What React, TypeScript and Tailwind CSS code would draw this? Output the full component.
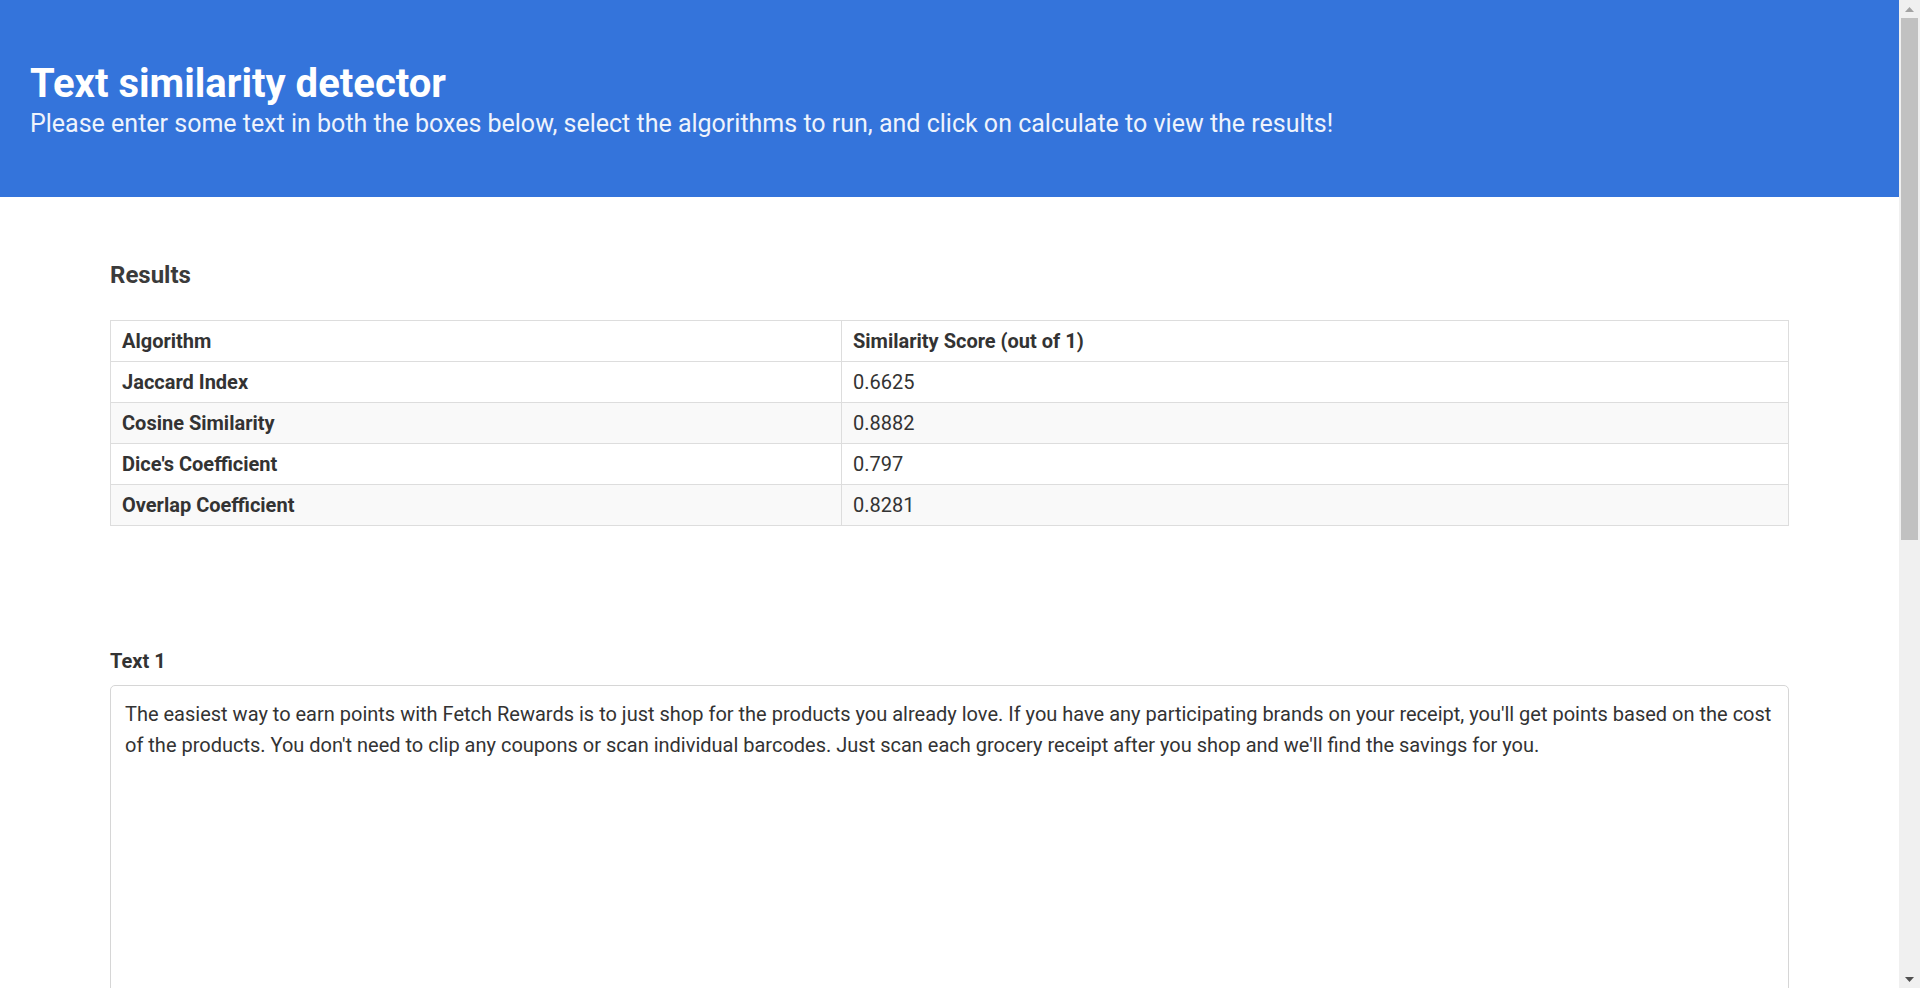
import { useState } from 'react'

const rows = [
  { name: 'Jaccard Index', score: '0.6625' },
  { name: 'Cosine Similarity', score: '0.8882' },
  { name: "Dice's Coefficient", score: '0.797' },
  { name: 'Overlap Coefficient', score: '0.8281' },
]

const text1 =
  "The easiest way to earn points with Fetch Rewards is to just shop for the products you already love. If you have any participating brands on your receipt, you'll get points based on the cost of the products. You don't need to clip any coupons or scan individual barcodes. Just scan each grocery receipt after you shop and we'll find the savings for you."

const text2 =
  "Fetch Rewards makes it easy to earn points. Just shop for the products you love and scan your receipt. If you bought any participating brands, you'll get points based on the cost of the products. No coupons to clip, no barcodes to scan."

function Scrollbar() {
  // the browser's own bar, drawn by hand so it shows in the shot
  return (
    <div className="sticky top-0 flex h-screen w-[21px] shrink-0 flex-col bg-[#f0f0f0]">
      <div className="flex h-[18px] items-center justify-center">
        <svg width="9" height="5" viewBox="0 0 9 5">
          <path d="M0 5 L4.5 0 L9 5 Z" fill="#a3a3a3" />
        </svg>
      </div>
      <div className="mx-[2px] h-[522px] bg-[#c1c1c1]" />
      <div className="flex-1" />
      <div className="flex h-[18px] items-center justify-center">
        <svg width="9" height="5" viewBox="0 0 9 5">
          <path d="M0 0 L9 0 L4.5 5 Z" fill="#505050" />
        </svg>
      </div>
    </div>
  )
}

export default function App() {
  const [t1, setT1] = useState(text1)
  const [t2, setT2] = useState(text2)

  return (
    <div className="flex items-start bg-white text-[#333] [font-family:Roboto,'Liberation_Sans',sans-serif]">
      <div className="min-w-0 flex-1">
        {/* header */}
        <div className="h-[197px] bg-[#3474db] px-[30px] pt-[60px]">
          <h1 className="text-[40px] leading-[48px] font-bold text-white">Text similarity detector</h1>
          <p className="text-[25px] leading-[32px] text-[#eef3fc]">
            Please enter some text in both the boxes below, select the algorithms to run, and click on calculate to view the results!
          </p>
        </div>

        <div className="px-[110px] pt-[63px] pb-[80px]">
          <h4 className="text-[24px] leading-[30px] font-bold text-[#3b3b3b]">Results</h4>

          <table className="mt-[30px] w-full border-collapse border border-[#dddddd] text-[20px]">
            <tbody>
              <tr className="h-[41px]">
                <th className="w-[731px] border border-[#dddddd] px-[11px] text-left font-bold">Algorithm</th>
                <th className="border border-[#dddddd] px-[11px] text-left font-bold">Similarity Score (out of 1)</th>
              </tr>
              {rows.map((r, i) => (
                <tr key={r.name} className={i % 2 === 1 ? 'h-[41px] bg-[#f9f9f9]' : 'h-[41px] bg-white'}>
                  <td className="border border-[#dddddd] px-[11px] font-bold">{r.name}</td>
                  <td className="border border-[#dddddd] px-[11px]">{r.score}</td>
                </tr>
              ))}
            </tbody>
          </table>

          <div className="mt-[120px]">
            <label className="block text-[20px] leading-[30px] font-bold">Text 1</label>
            <textarea
              value={t1}
              onChange={(e) => setT1(e.target.value)}
              className="mt-[9px] block h-[420px] w-full resize-none rounded-[5px] border border-[#d6d6d6] px-[14px] pt-[13px] pb-[10px] text-[20px] leading-[31px] text-[#333] outline-none"
            />
          </div>

          <div className="mt-[30px]">
            <label className="block text-[20px] leading-[30px] font-bold">Text 2</label>
            <textarea
              value={t2}
              onChange={(e) => setT2(e.target.value)}
              className="mt-[9px] block h-[420px] w-full resize-none rounded-[5px] border border-[#d6d6d6] px-[14px] pt-[13px] pb-[10px] text-[20px] leading-[31px] text-[#333] outline-none"
            />
          </div>

          <div className="mt-[30px] flex items-center gap-6 text-[20px]">
            {['Jaccard Index', 'Cosine Similarity', "Dice's Coefficient", 'Overlap Coefficient'].map((a) => (
              <label key={a} className="flex items-center gap-2">
                <input type="checkbox" defaultChecked className="h-[18px] w-[18px]" />
                {a}
              </label>
            ))}
          </div>

          <button className="mt-[30px] rounded-[5px] bg-[#3474db] px-[20px] py-[8px] text-[20px] text-white">Calculate</button>
        </div>
      </div>
      <Scrollbar />
    </div>
  )
}
